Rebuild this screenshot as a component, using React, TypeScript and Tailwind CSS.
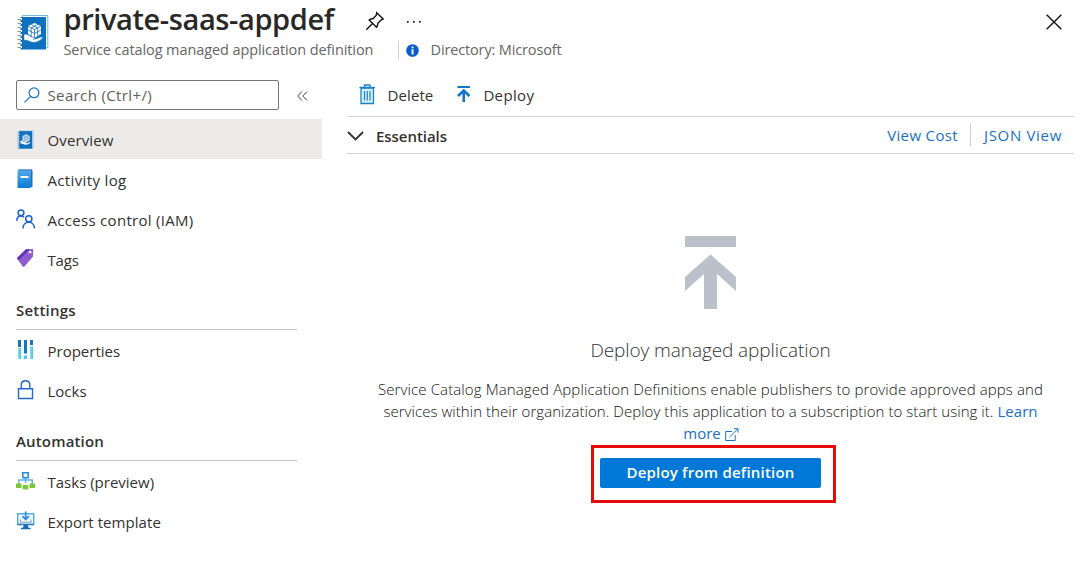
import type { ReactNode } from "react";

function Book({ className }: { className: string }) {
  return (
    <svg viewBox="0 0 32 35" className={className} fill="none">
      <path d="M6 .5h25.300v32H6z" fill="#fff" stroke="#7db5df" strokeWidth="1" />
      <path d="M4 2h25.500v32.500H4z" fill="#0f70bd" />
      <path d="M3 4h2.500M3 8h2.500M3 12h2.500M3 16h2.500M3 20h2.500M3 24h2.500M3 28h2.500M3 32h2.500" stroke="#fff" strokeWidth="2" />
      <path d="M1 4.500h3.500M1 8.500h3.500M1 12.500h3.500M1 16.500h3.500M1 20.500h3.500M1 24.500h3.500M1 28.500h3.500M1 32.500h3.500" stroke="#8798a6" strokeWidth="1" />
      <path d="M18 8l6.500 3v8L18 23l-6.500-4v-8z" fill="#fff" />
      <path d="M11.500 11l6.500 3.500 6.500-3.500M18 14.500V23M11.500 15l6.500 3.500 6.500-3.500M14.700 9.500l6.500 3.500v8M21.300 9.500L14.700 13v8" stroke="#0f70bd" strokeWidth=".8" />
      <path d="M7.500 19.500c2.500-1 4.500.2 6.500 2l4 1.200c1 .8 0 1.600-1.500 1.400 4 .5 7-2.200 9.200-2.100 1 .4 0 1.800-1 2.500-3 2.300-5.700 3.200-9.200 2.700-2.500-.6-4-2.200-8-2.200z" fill="#fff" stroke="#0f70bd" strokeWidth=".4" />
    </svg>
  );
}

function LogIcon() {
  return (
    <svg viewBox="0 0 18 20" className="w-[18px] h-5">
      <defs>
        <linearGradient id="log" x2="0" y2="1">
          <stop stopColor="#50a9ec" />
          <stop offset="1" stopColor="#0b7ad5" />
        </linearGradient>
      </defs>
      <path d="M3 .5h12.500v16H3z" fill="#8bc4ee" />
      <rect x="1.500" y="1.500" width="13.500" height="17.500" rx="1" fill="url(#log)" />
      <path d="M15 1h1.500v17H15zM2 .5h14v1H2z" fill="#1d6fb8" />
      <path d="M4.500 7h8v2h-8z" fill="#fff" />
    </svg>
  );
}

function PeopleIcon() {
  return (
    <svg viewBox="0 0 20 20" className="w-5 h-5" fill="none" stroke="#1b62ce" strokeWidth="1.500">
      <circle cx="5" cy="3.800" r="2.900" />
      <path d="M.8 12c0-3 1.700-5 4.200-5 1.300 0 2.300.5 3 1.300" />
      <circle cx="12.800" cy="9.800" r="3.100" />
      <path d="M7 19.500c0-3.800 2.300-6.300 5.700-6.300s5.800 2.500 5.800 6.300" />
    </svg>
  );
}

function TagIcon() {
  return (
    <svg viewBox="0 0 18 20" className="w-[18px] h-5 -translate-y-px">
      <path d="M1.500 9.500L10 1.300l6-.3c.8 0 1.200.5 1.200 1.200L17 8.500l-8.500 10c-.6.6-1.200.6-1.800 0L1.300 11c-.4-.5-.4-1 .2-1.500z" fill="#8f5cd0" />
      <path d="M1.500 9.500L10 1.300l3.500-.1L4.700 10.500l-2.500 1.600-.9-1.100c-.4-.5-.4-1 .2-1.500z" fill="#6531b5" />
      <circle cx="14.200" cy="4" r="1.300" fill="#fff" />
      <path d="M14 4l-2 1.500" stroke="#d9c5f3" />
    </svg>
  );
}

function PropertiesIcon() {
  return (
    <svg viewBox="0 0 18 20" className="w-[18px] h-5">
      <path d="M2 0h3v7H2zM8 0h3v13.500H8zM14 0h3v5h-3z" fill="#1475c4" />
      <path d="M2 8h3v11H2zM8 15.500h3V19H8zM14 6.500h3V19h-3z" fill="#4bcbea" />
      <path d="M2 8h1.500v11H2zM14 6.500h1.500V19H14z" fill="#7bdcf1" />
    </svg>
  );
}

function LockIcon() {
  return (
    <svg viewBox="0 0 18 20" className="w-[18px] h-5" fill="none" stroke="#2468d0" strokeWidth="1.400">
      <path d="M2.500 8.800h14v9.700h-14zM5.200 8.500V5c0-5.600 8.600-5.600 8.600 0v3.500" />
    </svg>
  );
}

function TasksIcon() {
  return (
    <svg viewBox="0 0 20 20" className="w-5 h-5" fill="none">
      <path d="M9.500 6v6M2.800 13V9h13.500v4" stroke="#66aee6" strokeWidth="1.400" />
      <path d="M6.800 1.700h5.400v5H6.800z" fill="#eaf6fd" stroke="#278bdc" strokeWidth="1.500" />
      <path d="M0 12.500h5.500v4.500H0zM6.700 14h5.600v4.500H6.700zM13.500 12.500H19v4.500h-5.500z" fill="#7cc63a" />
    </svg>
  );
}

function ExportIcon() {
  return (
    <svg viewBox="0 0 20 20" className="w-5 h-5" fill="none">
      <path d="M1.700 2.700h16v10.800h-16z" fill="#eef8ff" stroke="#52a7e6" strokeWidth="1.400" />
      <path d="M1.700 13.500h16" stroke="#2776b6" strokeWidth="1.300" />
      <path d="M4.500 8.500v2.800h10.500V8.500" stroke="#8c9fae" strokeWidth="1.100" />
      <path d="M9.700.5v7.500M6.500 5.200L9.700 8.500l3.200-3.300" stroke="#2a8ade" strokeWidth="1.700" />
      <path d="M7.800 14h4l.7 2.700h2v1.500H5v-1.500h2z" fill="#1a69ae" />
    </svg>
  );
}

function NavItem({ icon, children, className = "" }: { icon: ReactNode; children: ReactNode; className?: string }) {
  return (
    <div className={`flex h-10 items-center pl-4 ${className}`}>
      <span className="flex w-[31.500px] shrink-0">{icon}</span>
      <span className="pt-px">{children}</span>
    </div>
  );
}

export default function App() {
  return (
    <div className="flex h-[563px] w-[1091px] flex-col overflow-hidden bg-white font-['Open_Sans',sans-serif] text-[15px] leading-[22px] whitespace-nowrap text-[#323130]">
      <header className="flex h-[80px] shrink-0 items-start pl-4">
        <Book className="mt-[15px] h-[35px] w-[33px]" />
        <div className="ml-[14.500px] flex flex-col">
          <div className="flex h-[38px] items-start">
            <h1 className="w-[301.500px] text-[29px] leading-[38px] font-semibold tracking-[-0.4px] text-[#292827]">private-saas-appdef</h1>
            <svg viewBox="0 0 20 20" className="mt-[11px] h-5 w-5" fill="none" stroke="#111" strokeWidth="1.400">
              <path d="M11.700 1.800l6.400 6.300-1.800.7-3.500 3.500c.1 1.500-.4 2.800-1.300 3.900L4.200 9c1.100-.9 2.400-1.300 3.800-1.200l3.300-3.600zM7.500 12.500l-6.200 6.200" />
            </svg>
            <svg viewBox="0 0 16 4" className="mt-[20px] ml-[21px] h-1 w-4" fill="#222">
              <path d="M1 1h1.700v1.700H1zM7 1h1.700v1.700H7zM13 1h1.700v1.700H13z" />
            </svg>
          </div>
          <div className="flex h-[24px] items-center text-[14.500px] text-[#666564]">
            <span className="w-[334px] tracking-[-0.090px]">Service catalog managed application definition</span>
            <span className="h-[18px] w-px bg-[#cfcfcf]" />
            <svg viewBox="0 0 13 13" className="ml-[7px] h-[13px] w-[13px]">
              <circle cx="6.500" cy="6.500" r="6.300" fill="#0b5bd0" />
              <path d="M5.600 2.400h1.900v1.800H5.600zM5.600 5.200h1.900v5.200H5.600z" fill="#fff" />
            </svg>
            <span className="ml-[12px] tracking-[-0.140px]">Directory: Microsoft</span>
          </div>
        </div>
        <svg viewBox="0 0 16 16" className="mt-[14px] mr-[29px] ml-auto h-4 w-4" stroke="#111" strokeWidth="1.400">
          <path d="M.7.700l14.600 14.600M15.300.700L.7 15.300" />
        </svg>
      </header>

      <div className="flex min-h-0 flex-1">
        <aside className="w-[322px] shrink-0">
          <div className="flex h-[39px] items-start pl-4">
            <div className="flex h-[30px] w-[263px] items-center rounded-[2px] border border-[#767574] pl-[7px] text-[#605e5c]">
              <svg viewBox="0 0 16 16" className="h-4 w-4" fill="none" stroke="#1574cf" strokeWidth="1.200">
                <circle cx="10" cy="5.800" r="4.900" />
                <path d="M6.500 9.300L.5 15.300" />
              </svg>
              <span className="mb-px ml-[7.500px] tracking-[0.370px]">Search (Ctrl+/)</span>
            </div>
            <svg viewBox="0 0 11 10" className="mt-[11px] ml-[18px] h-[10px] w-[11px]" fill="none" stroke="#444" strokeWidth="1">
              <path d="M5 .5L.8 5 5 9.500M10 .5L5.800 5 10 9.500" />
            </svg>
          </div>
          <nav>
            <NavItem className="bg-[#ecebea] tracking-[0.130px]" icon={<Book className="h-[19px] w-[18px]" />}>Overview</NavItem>
            <NavItem className="tracking-[0.350px]" icon={<LogIcon />}>Activity log</NavItem>
            <NavItem className="tracking-[0.300px]" icon={<PeopleIcon />}>Access control (IAM)</NavItem>
            <NavItem className="tracking-[-0.200px]" icon={<TagIcon />}>Tags</NavItem>
          </nav>
          <h2 className="mt-[10px] ml-4 h-[41px] w-[281px] border-b border-[#c5c5c5] pt-[10px] font-semibold tracking-[0.200px]">Settings</h2>
          <nav>
            <NavItem icon={<PropertiesIcon />}>Properties</NavItem>
            <NavItem icon={<LockIcon />}>Locks</NavItem>
          </nav>
          <h2 className="mt-[10px] ml-4 h-[41px] w-[281px] border-b border-[#c5c5c5] pt-[10px] font-semibold tracking-[0.160px]">Automation</h2>
          <nav>
            <NavItem icon={<TasksIcon />}>Tasks (preview)</NavItem>
            <NavItem className="tracking-[0.060px]" icon={<ExportIcon />}>Export template</NavItem>
          </nav>
        </aside>

        <main className="ml-[25px] flex w-[727px] flex-col">
          <div className="flex h-[37px] items-start border-b border-[#d2d2d2] pl-3">
            <svg viewBox="0 0 17 21" className="mt-[4px] h-[21px] w-[17px]" fill="none">
              <path d="M2 4h12.500v15.500H2z" fill="#d8f0ff" stroke="#1681cf" strokeWidth="1.300" />
              <path d="M.5 3.500h15.500M5.500 3V1h5.500v2" stroke="#1681cf" strokeWidth="1.300" />
              <path d="M5.500 7v9.500M8.250 7v9.500M11 7v9.500" stroke="#1681cf" strokeWidth="1.200" />
            </svg>
            <span className="mt-[4px] ml-[11.500px] tracking-[0.100px]">Delete</span>
            <svg viewBox="0 0 14 18" className="mt-[5px] ml-[24px] h-[18px] w-[14px]" fill="none" stroke="#0f78ce">
              <path d="M.5 2h12.500" strokeWidth="2" />
              <path d="M1 11l5.750-5.500L12.500 11M6.750 6v11" strokeWidth="2.600" />
            </svg>
            <span className="mt-[4px] ml-[12px] tracking-[0.350px]">Deploy</span>
          </div>
          <div className="flex h-[37px] items-center border-b border-[#d2d2d2]">
            <svg viewBox="0 0 18 10" className="mt-px h-[10px] w-[18px]" fill="none" stroke="#333" strokeWidth="1.900">
              <path d="M1 1l7.500 7.500L16 1" />
            </svg>
            <span className="ml-[11px] pt-px font-semibold tracking-[-0.050px]">Essentials</span>
            <span className="ml-auto tracking-[0.350px] text-[#1a6fc4]">View Cost</span>
            <span className="ml-[12px] h-[23px] w-px -translate-y-px bg-[#cfcfcf]" />
            <span className="mr-[12px] ml-[13px] tracking-[0.680px] text-[#1a6fc4]">JSON View</span>
          </div>
          <section className="flex flex-col items-center pt-[82px] text-center font-light">
            <svg viewBox="0 0 51 73" className="h-[73px] w-[51px]" fill="#bac1ca">
              <path d="M0 0h51v11H0zM25.500 18.500L51 41v14L32 38v35H19V38L0 55V41z" />
            </svg>
            <h3 className="mt-[27px] text-[19px] leading-[28px] tracking-[-0.080px] text-[#333]">Deploy managed application</h3>
            <p className="mt-[14px] mb-px text-[#111]">
              <span className="block tracking-[0.115px]">Service Catalog Managed Application Definitions enable publishers to provide approved apps and</span>
              <span className="block tracking-[0.050px]">
                services within their organization. Deploy this application to a subscription to start using it. <a className="font-normal text-[#1a6fc4]">Learn</a>
              </span>
              <a className="flex items-center justify-center pl-px font-normal text-[#1a6fc4]">
                more
                <svg viewBox="0 0 14 13" className="mt-[3px] ml-[4px] h-[13px] w-[14px]" fill="none" stroke="#1a73c8" strokeWidth="1">
                  <path d="M7 3.500H.7v9h9.500V7M4.500 9L13 .7M9 .7h4v4" />
                </svg>
              </a>
            </p>
            <div className="ml-[6px] flex h-[58px] w-[245px] border-[3px] border-[#e60c0c] pt-[10px] pl-[6px]">
              <button className="flex h-[30px] w-[221px] items-center justify-center rounded-[2px] bg-[#0078d7] pb-[2px] font-semibold tracking-[0.200px] text-white">Deploy from definition</button>
            </div>
          </section>
        </main>
      </div>
    </div>
  );
}
